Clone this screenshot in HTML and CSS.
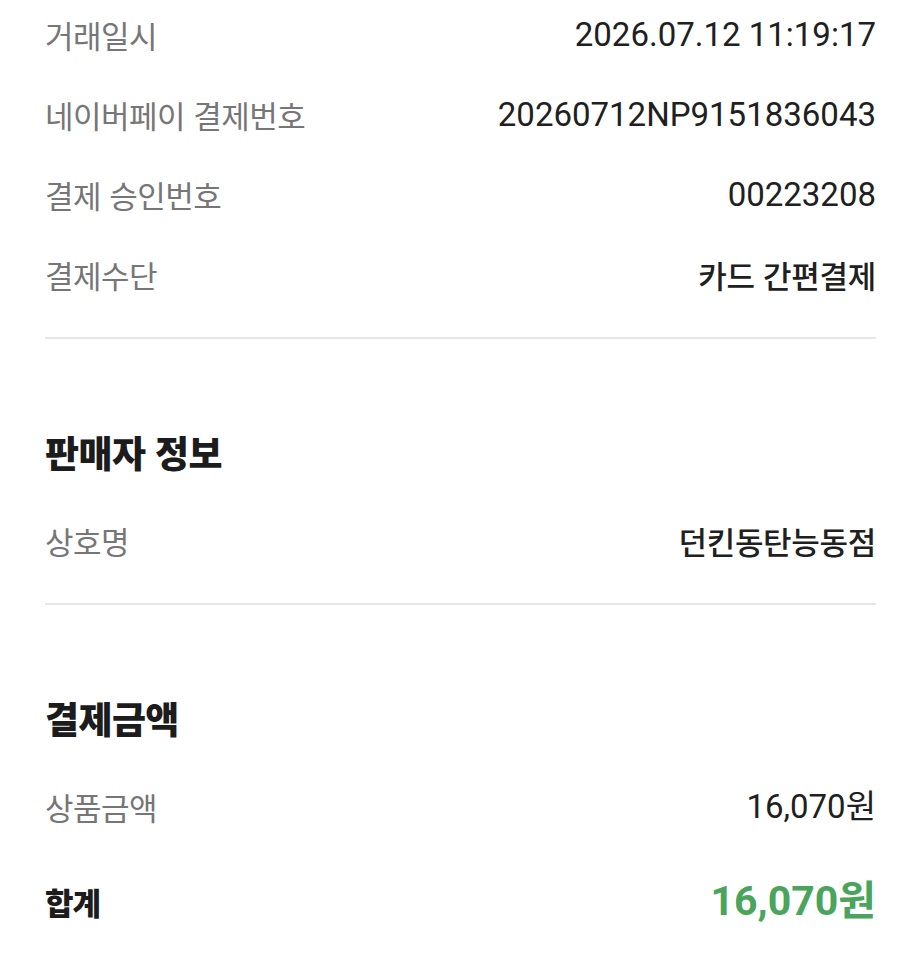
FILE: index.html
```html
<!DOCTYPE html>
<html lang="ko">
<head>
  <meta charset="UTF-8">
  <title>결제 상세</title>
  <link rel="stylesheet" href="styles.css">
</head>
<body>

  <main class="receipt">
    <section class="block">
      <div class="row">
        <span class="label">거래일시</span>
        <span class="value num">2026.07.12 11:19:17</span>
      </div>
      <div class="row">
        <span class="label">네이버페이 결제번호</span>
        <span class="value num">20260712NP9151836043</span>
      </div>
      <div class="row">
        <span class="label">결제 승인번호</span>
        <span class="value num">00223208</span>
      </div>
      <div class="row">
        <span class="label">결제수단</span>
        <span class="value">카드 간편결제</span>
      </div>
    </section>

    <section class="block">
      <h2 class="block-title">판매자 정보</h2>
      <div class="row">
        <span class="label">상호명</span>
        <span class="value">던킨동탄능동점</span>
      </div>
    </section>

    <section class="block">
      <h2 class="block-title">결제금액</h2>
      <div class="row">
        <span class="label">상품금액</span>
        <span class="value num">16,070원</span>
      </div>
      <div class="row total-row">
        <span class="total-label">합계</span>
        <span class="total-value">16,070원</span>
      </div>
    </section>
  </main>

</body>
</html>
```

FILE: styles.css
```css
:root {
  --text-dark: #1c1c1c;
  --text-value: #202020;
  --text-gray: #767676;
  --line-gray: #e6e6e6;
  --naver-green: #4aa45b;
}

body {
  margin: 0;
  background-color: #ffffff;
  font-family: "Noto Sans CJK KR", sans-serif;
  color: var(--text-dark);
}

.receipt {
  margin-top: -5px;
  padding: 0 24px 0 45px;
}

.block {
  padding-bottom: 22px;
  border-bottom: 2px solid var(--line-gray);
}
.block + .block {
  padding-top: 93px;
}
.block:last-child {
  border-bottom: none;
}

.block-title {
  margin: 0 0 29px;
  font-size: 37px;
  line-height: 40px;
  font-weight: 900;
  letter-spacing: -0.6px;
  color: var(--text-dark);
}

.row {
  display: flex;
  justify-content: space-between;
  align-items: center;
  height: 80px;
  line-height: 1.2;
}

.label {
  font-size: 31px;
  letter-spacing: -0.5px;
  color: var(--text-gray);
}

.value {
  font-size: 31px;
  font-weight: 500;
  letter-spacing: -0.3px;
  color: var(--text-value);
}
.value.num {
  font-family: Roboto, "Noto Sans CJK KR", sans-serif;
  font-size: 33px;
  font-weight: 400;
  letter-spacing: 0;
}

/* 합계 */
.total-row {
  margin-top: 15px;
}
.total-label {
  font-size: 31px;
  font-weight: 900;
  letter-spacing: -1px;
  color: var(--text-dark);
}
.total-value {
  font-family: Roboto, "Noto Sans CJK KR", sans-serif;
  font-size: 41px;
  font-weight: 700;
  color: var(--naver-green);
}
```
